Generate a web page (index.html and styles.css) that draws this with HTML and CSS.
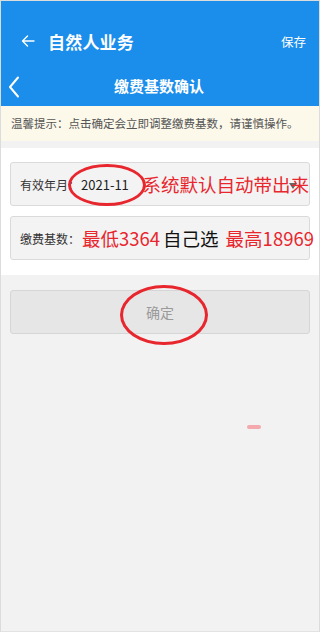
FILE: index.html
```html
<!DOCTYPE html>
<html lang="zh">
<head>
<meta charset="utf-8">
<link rel="stylesheet" href="styles.css">
</head>
<body>
<div class="screen">
  <header class="header">
    <div class="top-row">
      <div class="top-left">
        <svg class="back-arrow" width="14" height="12" viewBox="0 0 14 12"><path d="M13 6H1.5M6.5 1L1.5 6l5 5" fill="none" stroke="#fff" stroke-width="1.4" stroke-linecap="round" stroke-linejoin="round"/></svg>
        <span class="app-title">自然人业务</span>
      </div>
      <span class="save">保存</span>
    </div>
    <div class="nav-row">
      <svg class="chevron" width="12" height="22" viewBox="0 0 12 22"><path d="M10 1.5L2 11l8 9.5" fill="none" stroke="#fff" stroke-width="2" stroke-linecap="round" stroke-linejoin="round"/></svg>
      <span class="nav-title">缴费基数确认</span>
    </div>
  </header>
  <div class="tip">温馨提示：点击确定会立即调整缴费基数，请谨慎操作。</div>
  <div class="gap"></div>
  <section class="form">
    <div class="field">
      <span class="label">有效年月：</span>
      <span class="value">2021-11</span>
      <span class="red big note1">系统默认自动带出来</span>
      <span class="caret"></span>
      <span class="ellipse e1"></span>
    </div>
    <div class="field">
      <span class="label">缴费基数：</span>
      <span class="red big low">最低3364</span>
      <span class="black big">自己选</span>
      <span class="red big">最高18969</span>
    </div>
  </section>
  <div class="btn-wrap">
    <div class="btn">确定<span class="ellipse e2"></span></div>
  </div>
  <div class="blob"></div>
</div>
</body>
</html>
```
FILE: styles.css
```css
* { box-sizing: border-box; margin: 0; padding: 0; }
html, body { width: 320px; height: 632px; overflow: hidden; }
body {
  font-family: "Noto Sans CJK SC", "Noto Sans", sans-serif;
  background: #f2f2f2;
}
.screen {
  width: 320px;
  height: 632px;
  border: 1px solid #dcdcdc;
  border-bottom-color: #e2e2e2;
  background: #f2f2f2;
  position: relative;
}
.header {
  background: #1b8deb;
  height: 105px;
  color: #fff;
}
.top-row {
  height: 70px;
  padding: 10px 13px 0 20px;
  display: flex;
  align-items: center;
  justify-content: space-between;
}
.top-left { display: flex; align-items: center; }
.back-arrow { margin-right: 13px; }
.app-title { font-size: 17px; font-weight: bold; letter-spacing: 0.2px; }
.save { font-size: 12.5px; }
.nav-row {
  height: 35px;
  display: flex;
  align-items: center;
  position: relative;
  padding-left: 7px;
  padding-bottom: 4px;
}
.nav-title {
  position: absolute;
  left: 0; right: 0;
  text-align: center;
  font-size: 15px;
  font-weight: bold;
  padding-right: 2px;
  top: 4px;
}
.tip {
  background: #fcf8ea;
  height: 35px;
  line-height: 35px;
  padding-left: 10px;
  font-size: 11.5px;
  color: #555;
}
.gap { height: 7px; background: #f2f2f2; }
.form {
  background: #fff;
  padding: 14px 9px 15px 9px;
  display: flex;
  flex-direction: column;
  gap: 10px;
}
.field {
  height: 44px;
  background: #f3f3f3;
  border: 1px solid #dadada;
  border-radius: 3px;
  display: flex;
  align-items: center;
  padding-left: 9px;
  position: relative;
  white-space: nowrap;
}
.label { font-size: 12px; color: #333; }
.value { font-size: 13px; color: #222; margin-left: 1px; width: 62px; }
.big { font-size: 18.5px; line-height: 1; }
.red { color: #e8262e; }
.low { margin-left: 2px; }
.black { color: #111; margin: 0 7px 0 3px; }
.note1 { position: relative; z-index: 1; }
.caret {
  position: absolute;
  right: 12px;
  top: 20px;
  border-left: 4px solid transparent;
  border-right: 4px solid transparent;
  border-top: 6px solid #666;
}
.ellipse {
  position: absolute;
  border: 3px solid #e8262e;
  border-radius: 50%;
}
.e1 { left: 57px; top: 1px; width: 78px; height: 42px; }
.btn-wrap { padding: 15px 9px; }
.btn {
  height: 44px;
  background: #e6e6e6;
  border: 1px solid #d6d6d6;
  border-radius: 3px;
  display: flex;
  align-items: center;
  justify-content: center;
  font-size: 14px;
  color: #9a9a9a;
  position: relative;
}
.e2 { left: 109px; top: -6px; width: 88px; height: 60px; }
.blob {
  position: absolute;
  left: 246px; top: 424px;
  width: 14px; height: 4px;
  background: #f4a9ae;
  border-radius: 2px;
}
```
